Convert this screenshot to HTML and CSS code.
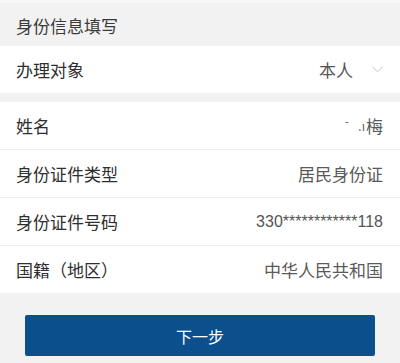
FILE: index.html
```html
<!DOCTYPE html>
<html lang="zh-CN">
<head>
<meta charset="utf-8">
<title>身份信息填写</title>
<link rel="stylesheet" href="styles.css">
</head>
<body>
<div class="page">
  <div class="section-title">身份信息填写</div>
  <div class="group">
    <div class="row">
      <span class="label">办理对象</span>
      <span class="value select">本人
        <svg class="chev" width="11" height="7" viewBox="0 0 11 7"><path d="M0.5 0.8 L5.5 5.8 L10.5 0.8" fill="none" stroke="#c4c4c4" stroke-width="1"/></svg>
      </span>
    </div>
  </div>
  <div class="gap"></div>
  <div class="group">
    <div class="row">
      <span class="label">姓名</span>
      <span class="value name"><span class="blur1">-</span><span class="blur2">.ı</span>梅</span>
    </div>
    <div class="row">
      <span class="label">身份证件类型</span>
      <span class="value">居民身份证</span>
    </div>
    <div class="row">
      <span class="label">身份证件号码</span>
      <span class="value num">330************118</span>
    </div>
    <div class="row">
      <span class="label">国籍（地区）</span>
      <span class="value">中华人民共和国</span>
    </div>
  </div>
  <div class="footer">
    <button class="btn">下一步</button>
  </div>
</div>
</body>
</html>
```
FILE: styles.css
```css
html, body {
  margin: 0;
  padding: 0;
  background: #f2f2f2;
}
.page {
  width: 400px;
  height: 363px;
  overflow: hidden;
  font-family: "Noto Sans CJK SC", "Noto Sans", sans-serif;
  background: #f2f2f2;
}
.section-title {
  border-top: 3px solid #f8f8f8;
  display: flex;
  align-items: center;
  padding: 1px 16px 0 16px;
  height: 42px;
  font-size: 17px;
  color: #3a3a3a;
}
.group {
  background: #fff;
}
.row {
  height: 47px;
  display: flex;
  align-items: center;
  justify-content: space-between;
  padding: 0 17px 0 16px;
  font-size: 17px;
  border-bottom: 1px solid #ebebeb;
}
.group .row:last-child {
  border-bottom: none;
}
.group:first-of-type .row {
  height: 49px;
}
.label {
  color: #2e2e2e;
}
.value {
  color: #5a5a5a;
  display: flex;
  align-items: center;
}
.select {
  color: #555;
}
.chev {
  margin-left: 19px;
}
.gap {
  height: 9px;
}
.name .blur1 {
  color: #666;
  margin-right: 9px;
  font-size: 12px;
  position: relative;
  top: -5px;
}
.name .blur2 {
  color: #666;
  font-size: 13px;
  margin-right: 1px;
}
.num {
  font-family: "Liberation Sans", "Noto Sans", sans-serif;
  font-size: 16px;
  color: #555;
}
.footer {
  padding: 22px 25px 0 25px;
}
.btn {
  display: block;
  width: 100%;
  height: 41px;
  border: none;
  border-radius: 2px;
  background: #0b4f8c;
  color: #fff;
  font-family: "Noto Sans CJK SC", sans-serif;
  font-size: 16px;
  padding: 0;
}
```
